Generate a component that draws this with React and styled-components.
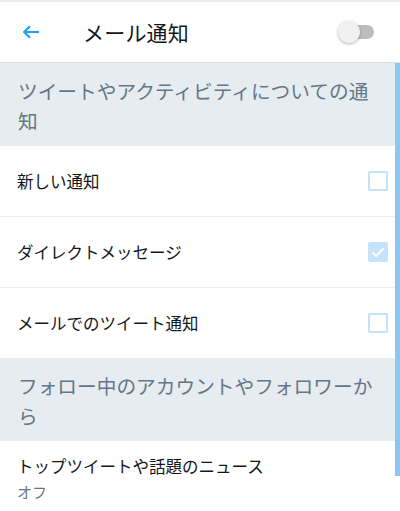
import React, { useState } from "react";
import styled, { createGlobalStyle } from "styled-components";

const GlobalStyle = createGlobalStyle`
  body {
    margin: 0;
    background: #fff;
    font-family: "Noto Sans CJK JP", "Noto Sans", sans-serif;
  }
`;

const sections = [
  {
    title: "ツイートやアクティビティについての通知",
    items: [
      { label: "新しい通知", checked: false },
      { label: "ダイレクトメッセージ", checked: true },
      { label: "メールでのツイート通知", checked: false },
    ],
  },
  {
    title: "フォロー中のアカウントやフォロワーから",
    items: [{ label: "トップツイートや話題のニュース", value: "オフ" }],
  },
];

export default function App() {
  const [enabled, setEnabled] = useState(false);

  return (
    <>
      <GlobalStyle />
      <Screen>
        <Header>
          <BackButton aria-label="戻る">
            <svg width="18" height="14" viewBox="0 0 18 14" fill="none">
              <path
                d="M17 7H2.5M8 1.2L2.2 7L8 12.8"
                stroke="#1da1f2"
                strokeWidth="2.2"
              />
            </svg>
          </BackButton>
          <Title>メール通知</Title>
          <Toggle on={enabled} onClick={() => setEnabled(!enabled)}>
            <Thumb on={enabled} />
          </Toggle>
        </Header>

        {sections.map((section) => (
          <div key={section.title}>
            <SectionHeader>{section.title}</SectionHeader>
            {section.items.map((item) =>
              item.value ? (
                <ValueRow key={item.label}>
                  <RowLabel>{item.label}</RowLabel>
                  <RowValue>{item.value}</RowValue>
                </ValueRow>
              ) : (
                <Row key={item.label}>
                  <RowLabel>{item.label}</RowLabel>
                  <Checkbox checked={item.checked}>
                    {item.checked && (
                      <svg width="14" height="11" viewBox="0 0 14 11" fill="none">
                        <path
                          d="M1.5 5.5L5 9L12.5 1.5"
                          stroke="#fff"
                          strokeWidth="2"
                        />
                      </svg>
                    )}
                  </Checkbox>
                </Row>
              )
            )}
          </div>
        ))}

        <ScrollThumb />
      </Screen>
    </>
  );
}

const Screen = styled.div`
  position: relative;
  width: 400px;
  height: 511px;
  overflow: hidden;
  border-top: 2px solid #ececec;
  box-sizing: border-box;
`;

const Header = styled.div`
  display: flex;
  align-items: center;
  height: 60px;
  padding: 0 26px 0 22px;
  border-bottom: 1px solid #dedede;
`;

const BackButton = styled.div`
  display: flex;
  align-items: center;
  width: 18px;
  margin-right: 43px;
`;

const Title = styled.div`
  flex: 1;
  font-size: 21px;
  color: #14171a;
  letter-spacing: 0.2px;
`;

const Toggle = styled.div`
  position: relative;
  width: 34px;
  height: 14px;
  border-radius: 7px;
  background: ${({ on }) => (on ? "#8ed0fa" : "#bdbdbd")};
  cursor: pointer;
`;

const Thumb = styled.div`
  position: absolute;
  top: -4px;
  left: ${({ on }) => (on ? "14px" : "-2px")};
  width: 22px;
  height: 22px;
  border-radius: 50%;
  background: ${({ on }) => (on ? "#1da1f2" : "#f1f1f1")};
  box-shadow: 0 1px 3px rgba(0, 0, 0, 0.3);
`;

const SectionHeader = styled.div`
  background: #e6ecf0;
  color: #657786;
  font-size: 19.7px;
  line-height: 30px;
  padding: 13px 18px 10px 18px;
`;

const Row = styled.div`
  display: flex;
  align-items: center;
  justify-content: space-between;
  height: 70px;
  padding: 0 12px 0 17px;
  border-bottom: 1px solid #ededed;
  &:last-child {
    border-bottom: none;
  }
`;

const ValueRow = styled.div`
  display: flex;
  flex-direction: column;
  padding: 12px 17px;
`;

const RowLabel = styled.div`
  font-size: 16.5px;
  line-height: 26px;
  color: #14171a;
`;

const RowValue = styled.div`
  font-size: 15px;
  line-height: 26px;
  color: #657786;
`;

const Checkbox = styled.div`
  display: flex;
  align-items: center;
  justify-content: center;
  width: 20px;
  height: 20px;
  box-sizing: border-box;
  border-radius: 2px;
  border: 2px solid #c4e3fb;
  background: ${({ checked }) => (checked ? "#c4e3fb" : "transparent")};
`;

const ScrollThumb = styled.div`
  position: absolute;
  top: 61px;
  right: 0;
  width: 5px;
  height: 413px;
  background: #8ac8f4;
`;
